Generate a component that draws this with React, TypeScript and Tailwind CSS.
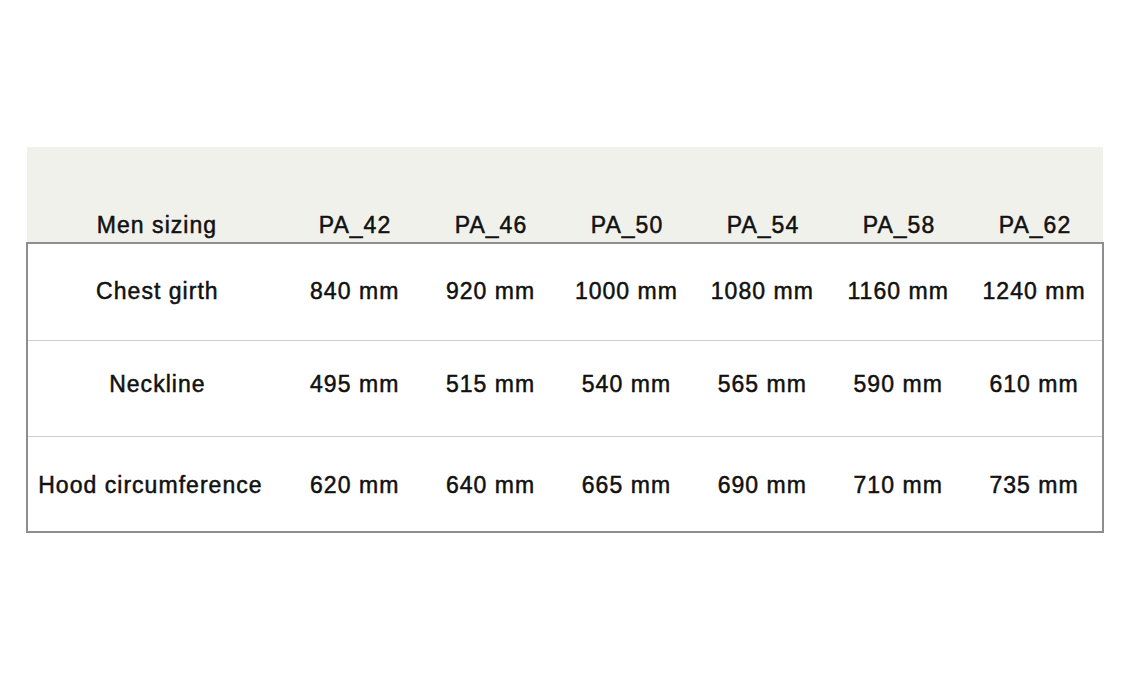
import React from "react";

const cols = ["PA_42", "PA_46", "PA_50", "PA_54", "PA_58", "PA_62"];
const rows: { label: string; values: string[]; cls: string; lab: string }[] = [
  { label: "Chest girth", values: ["840 mm", "920 mm", "1000 mm", "1080 mm", "1160 mm", "1240 mm"], cls: "h-[97px] pb-[2px]", lab: "" },
  { label: "Neckline", values: ["495 mm", "515 mm", "540 mm", "565 mm", "590 mm", "610 mm"], cls: "h-[96px] pb-[8px]", lab: "" },
  { label: "Hood circumference", values: ["620 mm", "640 mm", "665 mm", "690 mm", "710 mm", "735 mm"], cls: "h-[94px] pt-[3px]", lab: "pr-[14px]" },
];

const font = "font-['Liberation_Sans',Arial,sans-serif] text-[23px] tracking-[0.045em] text-[#111] [-webkit-text-stroke:0.5px_#111]";

export default function App() {
  return (
    <div className={`w-[1130px] h-[680px] bg-white pt-[147px] pl-[26px] ${font}`}>
      <div className="w-[1078px]">
        <div className="ml-px w-[1076px] h-[95px] bg-[#f1f1ec] flex items-end pb-[0px]">
          <div className="w-[260px] text-center">Men sizing</div>
          {cols.map((c) => (
            <div key={c} className="w-[136px] text-center">{c}</div>
          ))}
        </div>
        <div className="border-2 border-[#8e8e8e]">
          {rows.map((r, i) => (
            <div
              key={r.label}
              className={`flex items-center ${r.cls} ${i < rows.length - 1 ? "border-b border-[#cfcfcf]" : ""}`}
            >
              <div className={`w-[259px] text-center whitespace-nowrap ${r.lab}`}>{r.label}</div>
              {r.values.map((v, j) => (
                <div key={j} className="w-[136px] text-center whitespace-nowrap">{v}</div>
              ))}
            </div>
          ))}
        </div>
      </div>
    </div>
  );
}
